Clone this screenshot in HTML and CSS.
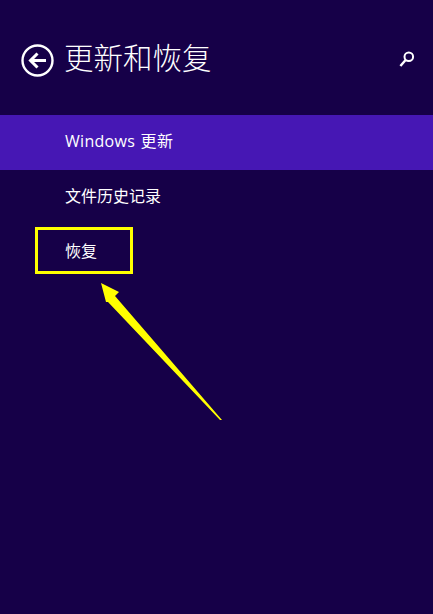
FILE: index.html
```html
<!DOCTYPE html>
<html lang="zh-CN">
<head>
    <meta charset="UTF-8">
    <meta name="viewport" content="width=device-width, initial-scale=1.0">
    <title>更新和恢复</title>
    <link rel="stylesheet" href="styles.css">
</head>
<body>
    <div class="panel">
        <header class="panel-header">
            <svg class="back-icon" width="33" height="33" viewBox="0 0 33 33">
                <circle cx="16.5" cy="16.5" r="15" fill="none" stroke="#fff" stroke-width="2.4"/>
                <path d="M16.5 9.5 L9.5 16.5 L16.5 23.5 M10 16.5 H25" fill="none" stroke="#fff" stroke-width="3"/>
            </svg>
            <h1>更新和恢复</h1>
            <svg class="search-icon" width="18" height="18" viewBox="0 0 18 18">
                <circle cx="10.8" cy="6.8" r="4.3" fill="none" stroke="#fff" stroke-width="2"/>
                <path d="M7.6 10 L2.4 16" fill="none" stroke="#fff" stroke-width="2.4"/>
            </svg>
        </header>

        <nav class="menu">
            <div class="menu-item selected">Windows 更新</div>
            <div class="menu-item">文件历史记录</div>
            <div class="menu-item">恢复</div>
        </nav>

        <!-- annotation drawn over the screenshot -->
        <div class="callout-box"></div>
        <svg class="callout-arrow" width="433" height="614" viewBox="0 0 433 614">
            <polygon points="101,283 119,292 115,296 222,420 220,420 108,302 106,302" fill="#ffff00"/>
        </svg>
    </div>
</body>
</html>
```

FILE: styles.css
```css
html, body {
    margin: 0;
    padding: 0;
}

body {
    font-family: "Open Sans", "Noto Sans CJK SC", sans-serif;
    background-color: #160048;
    color: #fff;
}

.panel {
    position: relative;
    width: 433px;
    height: 614px;
    overflow: hidden;
}

.panel-header {
    display: flex;
    align-items: center;
    height: 115px;
    box-sizing: border-box;
    padding: 0 17px 0 21px;
}

.back-icon {
    flex: none;
    margin-right: 10px;
    margin-top: 5px;
}

h1 {
    flex: 1;
    margin: 0;
    font-size: 29.5px;
    font-weight: 300;
    line-height: 40px;
}

.search-icon {
    flex: none;
    margin-top: 3px;
}

.menu-item {
    height: 55px;
    line-height: 53px;
    padding-left: 65px;
    font-size: 16px;
}

.selected {
    background-color: #4617b4;
    letter-spacing: 0.3px;
    word-spacing: 1px;
}

.callout-box {
    position: absolute;
    left: 35px;
    top: 227px;
    width: 92px;
    height: 41px;
    border: 3px solid #ffff00;
}

.callout-arrow {
    position: absolute;
    left: 0;
    top: 0;
}
```
